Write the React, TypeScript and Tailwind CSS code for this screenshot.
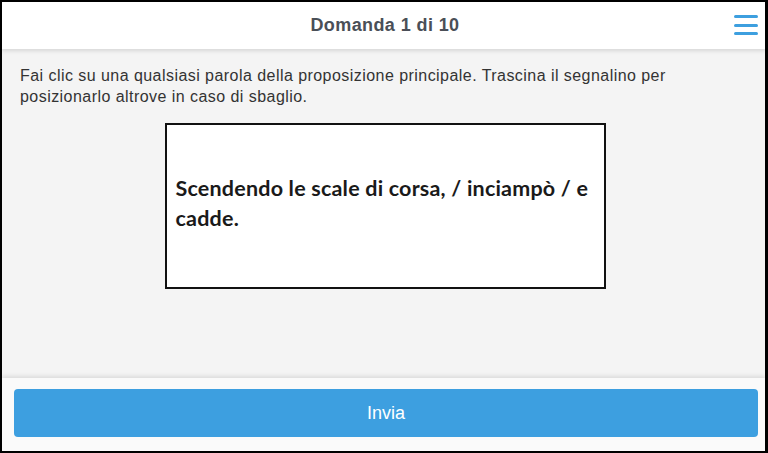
export default function App() {
  return (
    <div className="w-[768px] h-[453px] border-2 border-r-[3px] border-black bg-[#f4f4f4] flex flex-col overflow-hidden font-['Liberation_Sans',Arial,sans-serif]">
      <header className="relative h-[47px] shrink-0 bg-white flex items-center justify-center shadow-[0_2px_4px_rgba(0,0,0,0.12)] z-10">
        <h1 className="text-[18px] font-bold text-[#4a4f57] tracking-[0.4px] pl-[3px]">Domanda 1 di 10</h1>
        <button className="absolute right-[7px] top-[11px] w-[24px] h-[24px] flex flex-col justify-between py-[2px]">
          <span className="block h-[3px] w-full rounded-full bg-[#3d9fdf]" />
          <span className="block h-[3px] w-full rounded-full bg-[#3d9fdf]" />
          <span className="block h-[3px] w-full rounded-full bg-[#3d9fdf]" />
        </button>
      </header>

      <main className="flex-1 px-[18px] pt-[16px]">
        <p className="text-[16px] leading-[21px] text-[#333] tracking-[0.45px]">
          Fai clic su una qualsiasi parola della proposizione principale. Trascina il segnalino per posizionarlo altrove in caso di sbaglio.
        </p>
        <div className="flex justify-center mt-[16px] pl-[3px]">
          <div className="w-[441px] h-[166px] border-2 border-[#111] bg-white flex items-center pl-[9px] pr-[6px] pb-[6px]">
            <p className="font-['Lato','Open_Sans',sans-serif] font-bold text-[21.5px] leading-[30px] text-[#1a1a1a] tracking-[0.2px]">
              Scendendo le scale di corsa, / inciampò / e cadde.
            </p>
          </div>
        </div>
      </main>

      <footer className="shrink-0 h-[73px] bg-[#fafafa] shadow-[0_-2px_4px_rgba(0,0,0,0.1)] pl-[12px] pr-[7px] pt-[11px]">
        <button className="w-full h-[48px] rounded-[4px] bg-[#3d9fe0] text-white text-[18px]">Invia</button>
      </footer>
    </div>
  );
}
